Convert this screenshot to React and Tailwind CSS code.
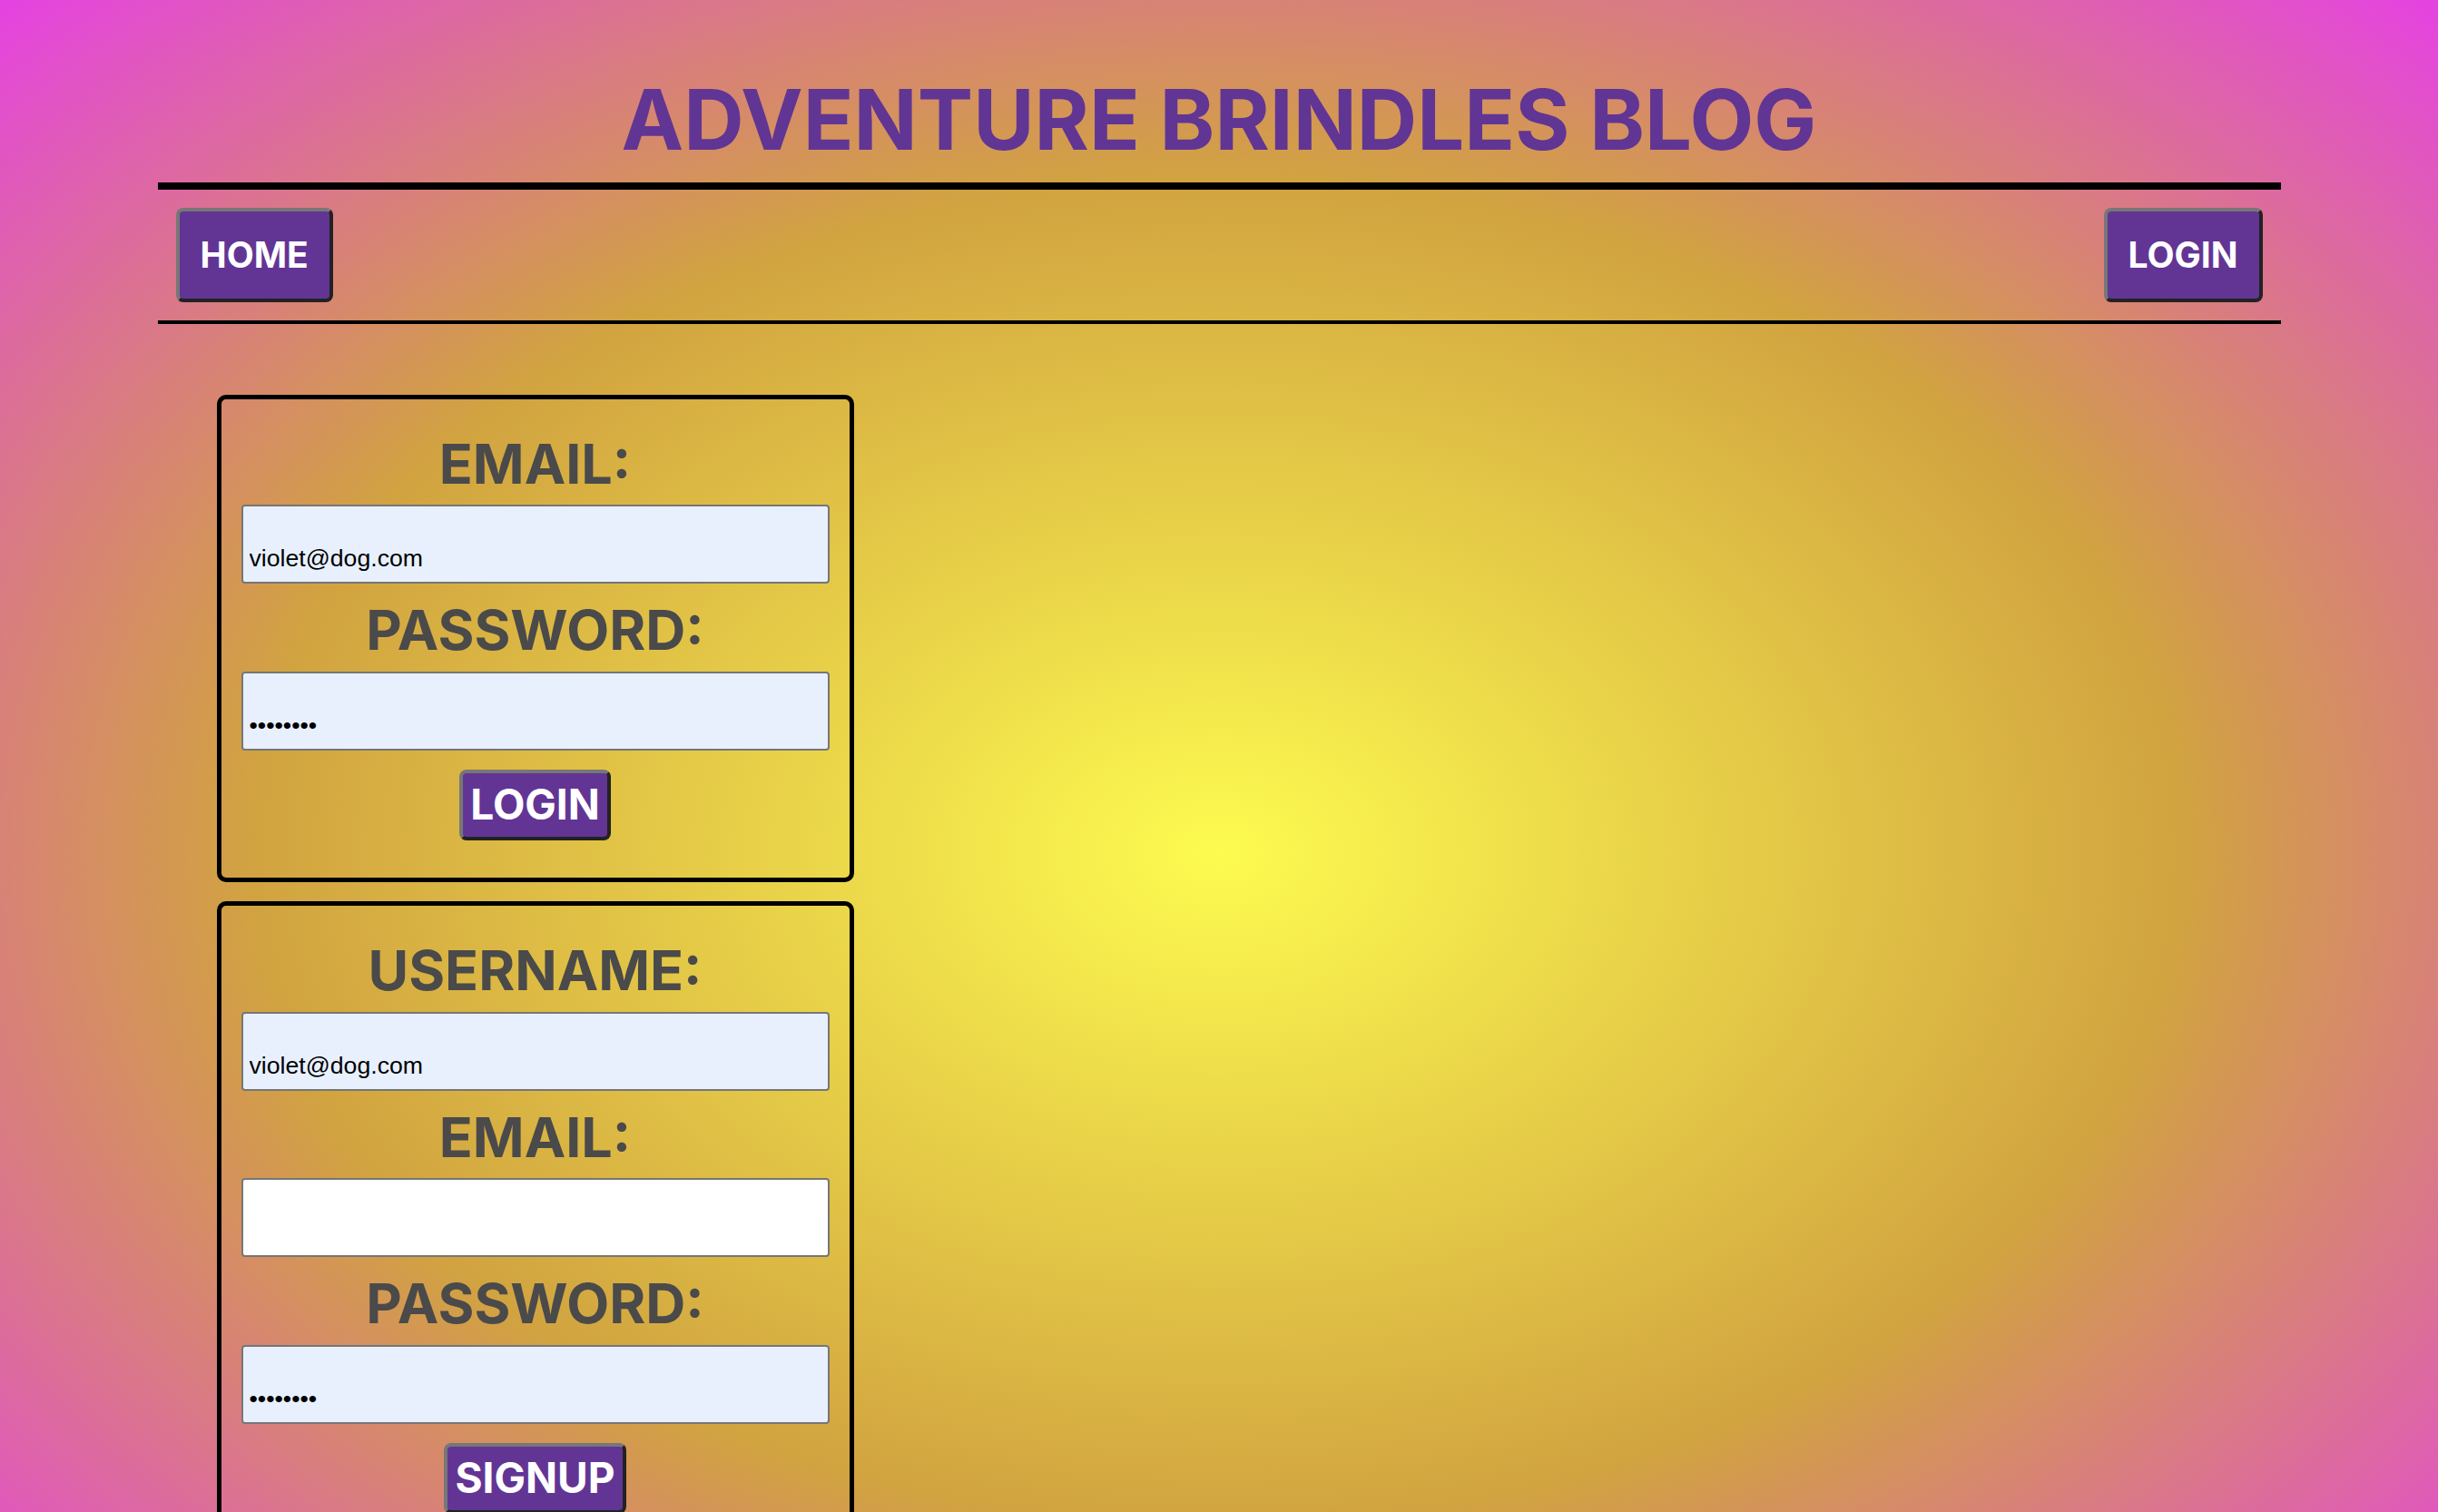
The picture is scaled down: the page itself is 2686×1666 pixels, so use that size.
import React from 'react'

function RaisedButton({ children, className = '' }) {
  return (
    <button
      type="button"
      className={
        'bg-[#623595] text-white font-bold leading-[1.21] rounded-[8px] border-4 border-t-[#777777] border-l-[#777777] border-b-[#222222] border-r-[#222222] ' +
        className
      }
      style={{ fontFamily: 'Inter, sans-serif' }}
    >
      {children}
    </button>
  )
}

function Field({ label, type = 'text', value = '', first = false }) {
  const filled = value !== ''
  return (
    <>
      <label
        className={
          'block text-center text-[61px] font-bold leading-[1.21] text-[#4a4a4a] ' + (first ? '' : 'mt-[15px]')
        }
      >
        {label}
      </label>
      <input
        type={type}
        defaultValue={value}
        readOnly
        className={
          'mt-[8px] block w-full h-[87px] border-2 border-[#767676] rounded-[4px] pl-[7px] pt-[34px] pb-[2px] text-[26.67px] text-black outline-none ' +
          (filled ? 'bg-[#e8f0fe]' : 'bg-white')
        }
        style={{ fontFamily: '"Liberation Sans", Arial, sans-serif' }}
      />
    </>
  )
}

function FormBox({ children, className = '' }) {
  return (
    <form
      className={'w-[702px] border-[5px] border-black rounded-[10px] px-[22px] pt-[35px] pb-[41px] flex flex-col ' + className}
      onSubmit={(e) => e.preventDefault()}
    >
      {children}
    </form>
  )
}

export default function App() {
  return (
    <div
      className="min-h-[1878px] bg-[radial-gradient(ellipse_at_center,#fdfb50_0%,#d1a340_56%,#e542e2_100%)]"
      style={{ fontFamily: 'Inter, "Noto Sans", sans-serif' }}
    >
      <div className="w-[2339px] mx-auto">
        <h1 className="pt-[76px] mb-[14px] text-center text-[92px] font-bold leading-[1.21] text-[#613594]">
          ADVENTURE BRINDLES BLOG
        </h1>
        <nav className="border-t-[8px] border-b-[4px] border-black py-[20px] px-[20px] flex justify-between items-center">
          <RaisedButton className="text-[39px] px-[23px] py-[24px]">HOME</RaisedButton>
          <RaisedButton className="text-[39px] px-[23px] py-[24px]">LOGIN</RaisedButton>
        </nav>

        <div className="mt-[78px] ml-[65px]">
          <FormBox>
            <Field label="EMAIL:" value="violet@dog.com" first />
            <Field label="PASSWORD:" type="password" value="password" />
            <div className="mt-[21px] flex justify-center">
              <RaisedButton className="text-[46px] px-[8px] py-[7px]">LOGIN</RaisedButton>
            </div>
          </FormBox>

          <FormBox className="mt-[21px]">
            <Field label="USERNAME:" value="violet@dog.com" first />
            <Field label="EMAIL:" />
            <Field label="PASSWORD:" type="password" value="password" />
            <div className="mt-[21px] flex justify-center">
              <RaisedButton className="text-[46px] px-[8px] py-[7px]">SIGNUP</RaisedButton>
            </div>
          </FormBox>
        </div>
      </div>
    </div>
  )
}
